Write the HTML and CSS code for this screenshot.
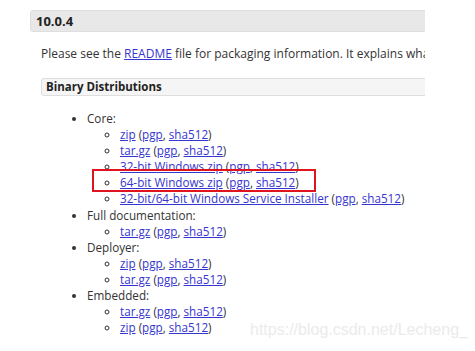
FILE: index.html
```html
<!DOCTYPE html>
<html>
<head>
    <meta name="viewport" content="width=device-width, initial-scale=1">
    <link rel="stylesheet" href="styles.css">
</head>
<body>
    <div class="page">
        <h3 class="release">10.0.4</h3>
        <div class="section">
            <p class="intro">Please see the <a href="#">README</a> file for packaging information. It explains what every distribution contains.</p>
            <h4 class="dist-title">Binary Distributions</h4>
            <ul class="dist">
                <li>Core:
                    <ul>
                        <li><a href="#">zip</a> (<a href="#">pgp</a>, <a href="#">sha512</a>)</li>
                        <li><a href="#">tar.gz</a> (<a href="#">pgp</a>, <a href="#">sha512</a>)</li>
                        <li><a href="#">32-bit Windows zip</a> (<a href="#">pgp</a>, <a href="#">sha512</a>)</li>
                        <li class="marked"><a href="#">64-bit Windows zip</a> (<a href="#">pgp</a>, <a href="#">sha512</a>)</li>
                        <li><a href="#">32-bit/64-bit Windows Service Installer</a> (<a href="#">pgp</a>, <a href="#">sha512</a>)</li>
                    </ul>
                </li>
                <li>Full documentation:
                    <ul>
                        <li><a href="#">tar.gz</a> (<a href="#">pgp</a>, <a href="#">sha512</a>)</li>
                    </ul>
                </li>
                <li>Deployer:
                    <ul>
                        <li><a href="#">zip</a> (<a href="#">pgp</a>, <a href="#">sha512</a>)</li>
                        <li><a href="#">tar.gz</a> (<a href="#">pgp</a>, <a href="#">sha512</a>)</li>
                    </ul>
                </li>
                <li>Embedded:
                    <ul>
                        <li><a href="#">tar.gz</a> (<a href="#">pgp</a>, <a href="#">sha512</a>)</li>
                        <li><a href="#">zip</a> (<a href="#">pgp</a>, <a href="#">sha512</a>)</li>
                    </ul>
                </li>
            </ul>
        </div>
    </div>
    <div class="watermark">https://blog.csdn.net/Lecheng_</div>
</body>
</html>
```

FILE: styles.css
```css
html {
    background-color: #fff;
}

body {
    margin: 0;
    font-family: 'Open Sans', 'Liberation Sans', sans-serif;
    font-size: 12px;
    color: #333;
    position: relative;
    height: 351px;
    overflow: hidden;
}

a {
    color: #3535d0;
}

.page {
    width: 395px;
    margin-left: 30px;
    padding-top: 10px;
    overflow: hidden;
}

.release {
    margin: 0;
    width: 420px;
    height: 20px;
    line-height: 20px;
    padding-left: 5px;
    font-size: 13px;
    font-weight: bold;
    color: #222;
    background-color: #e8e8e8;
    border: 1px solid #dedede;
    border-radius: 3px;
}

.section {
    padding-left: 11px;
}

.intro {
    margin: 13px 0 0;
    width: 500px;
    white-space: nowrap;
    line-height: 18px;
}

.dist-title {
    margin: 15px 0 0;
    width: 420px;
    height: 16px;
    line-height: 16px;
    padding-left: 4px;
    font-size: 11.5px;
    font-weight: bold;
    color: #222;
    background-color: #f5f5f5;
    border: 1px solid #dedede;
    border-radius: 3px;
}

.dist {
    margin: 14px 0 0;
    padding-left: 46px;
    font-size: 11.7px;
    line-height: 16.1px;
}

.dist ul {
    margin: 0;
    padding-left: 33px;
    list-style-type: circle;
}

.dist li {
    white-space: nowrap;
}

.marked {
    position: relative;
}

.marked::before {
    content: "";
    position: absolute;
    left: -28px;
    top: -5px;
    width: 220px;
    height: 19px;
    border: 2px solid #e0141e;
}

.watermark {
    position: absolute;
    left: 250px;
    top: 321px;
    font-family: 'Liberation Sans', Arial, sans-serif;
    font-size: 16px;
    color: #ebebeb;
}
```
